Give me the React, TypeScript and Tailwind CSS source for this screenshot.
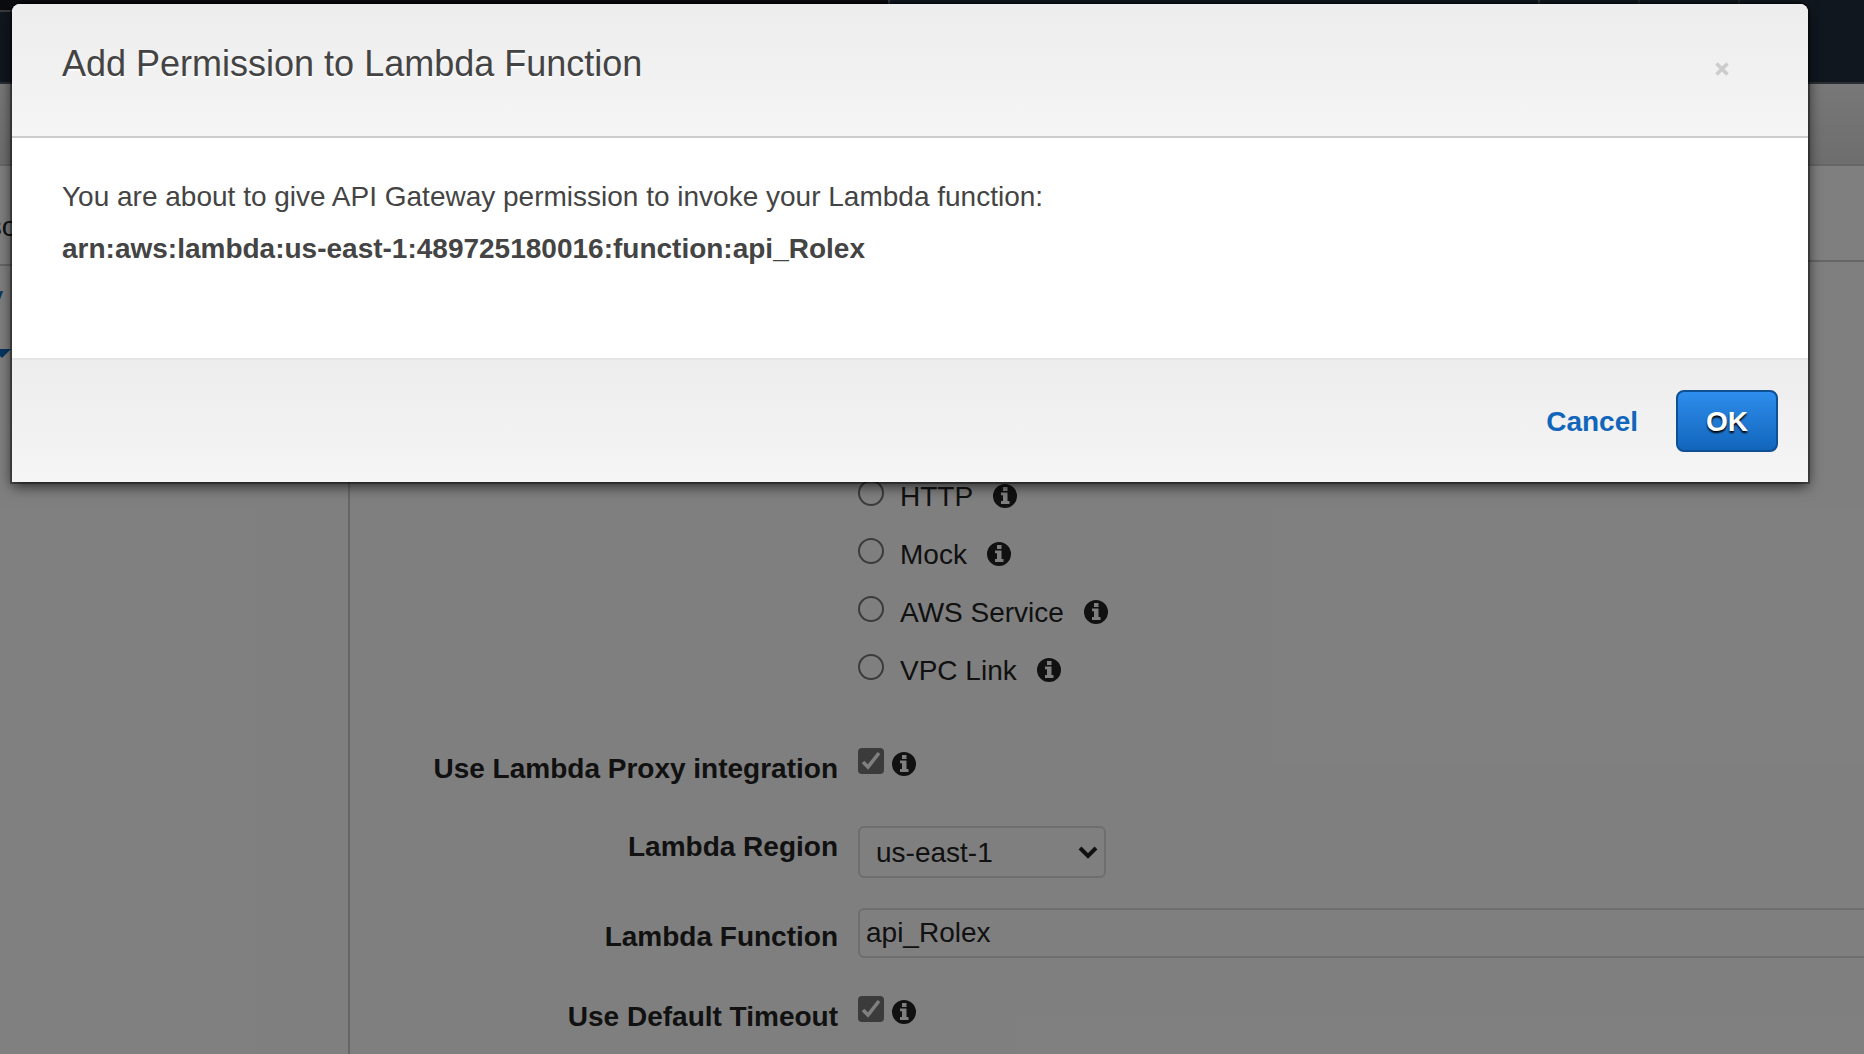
import React from 'react';
import { clsx } from 'clsx';

const integrationTypes = ['HTTP', 'Mock', 'AWS Service', 'VPC Link'];

function InfoIcon({ className }: { className?: string }) {
  return (
    <svg viewBox="0 0 24 24" className={clsx('size-6 shrink-0', className)} aria-hidden="true">
      <path
        fill="#222"
        fillRule="evenodd"
        d="M12 0a12 12 0 1 1 0 24a12 12 0 0 1 0-24zM10 3v4h4.500V3zM8 8.500v2.800h2v5.700H8v3h8.500v-3h-2V8.500z"
      />
    </svg>
  );
}

function Checkbox({ id }: { id: string }) {
  return (
    <span className="relative block size-[26px] shrink-0">
      <input
        id={id}
        type="checkbox"
        defaultChecked
        className="peer block size-[26px] appearance-none rounded border-2 border-[#767676] checked:bg-[#767676]"
      />
      <svg viewBox="0 0 26 26" className="pointer-events-none absolute inset-0 hidden peer-checked:block" aria-hidden="true">
        <path d="M5 14l5 5L21 5" fill="none" stroke="#fff" strokeWidth="3.6" />
      </svg>
    </span>
  );
}

interface FormRowProps {
  label: string;
  htmlFor: string;
  labelClassName?: string;
  className?: string;
  children: React.ReactNode;
}

function FormRow({ label, htmlFor, labelClassName, className, children }: FormRowProps) {
  return (
    <div className={clsx('flex items-start gap-5', className)}>
      <label
        htmlFor={htmlFor}
        className={clsx('w-[488px] shrink-0 text-right leading-[42px] font-bold', labelClassName)}
      >
        {label}
      </label>
      {children}
    </div>
  );
}

export default function App() {
  return (
    <div className="relative h-screen overflow-hidden bg-white font-['Liberation_Sans',Arial,sans-serif] text-[28px] text-[#222]">
      <div className="flex h-full min-w-[1920px] flex-col">
        {/* Console navigation */}
        <nav className="flex h-[84px] shrink-0 border-b-2 border-[#545b64] bg-[#232f3e]">
          <div className="w-[888px]">
            <div className="h-3 border-b-2 border-[#777] bg-[#16191f]" />
          </div>
          <div className="h-1 w-[652px] border-x-2 border-[#687078]" />
          <div className="h-1 w-[100px] border-r-2 border-[#444c56]" />
          <div className="h-1 w-[100px] border-r-2 border-[#444c56]" />
        </nav>
        <div className="h-[82px] shrink-0 border-b-2 border-[#ccc] bg-linear-to-b from-[#f0f0f0] to-[#dcdcdc]" />

        <div className="flex grow">
          <aside className="w-[350px] shrink-0 border-r-2 border-[#ccc]">
            <div className="flex h-[100px] items-center border-b-2 border-[#ccc]">
              <span className="-ml-12 pt-6">Resources</span>
            </div>
            <div className="relative h-[83px]">
              <span className="absolute top-2.5 left-[-11px] text-[#146eb4]">y</span>
              <svg viewBox="0 0 18 9" className="absolute top-[83px] -left-[7px] h-[9px] w-[18px]" aria-hidden="true">
                <path d="M0 0h18l-9 9z" fill="#0f69c4" />
              </svg>
            </div>
          </aside>

          <main className="flex grow flex-col">
            <div className="h-24 shrink-0 border-b-2 border-[#ccc]" />
            <form className="pt-[205px]">
              <div className="pb-[49px] pl-[508px]">
                {integrationTypes.map((type) => (
                  <div key={type} className="flex h-[58px] items-center">
                    <label className="flex h-full items-center gap-4">
                      <input
                        type="radio"
                        name="integration"
                        className="mb-1.5 size-[26px] appearance-none rounded-full border-2 border-[#767676]"
                      />
                      <span className="pt-0.5">{type}</span>
                    </label>
                    <InfoIcon className="ml-5" />
                  </div>
                ))}
              </div>

              <FormRow label="Use Lambda Proxy integration" htmlFor="proxy" className="mb-9">
                <div className="flex gap-2">
                  <Checkbox id="proxy" />
                  <InfoIcon className="mt-1" />
                </div>
              </FormRow>

              <FormRow label="Lambda Region" htmlFor="region" className="mb-[30px]">
                <div className="relative">
                  <select
                    id="region"
                    className="block h-[52px] w-[248px] appearance-none rounded-md border-2 border-[#ddd] bg-white px-4 pt-0.5"
                  >
                    <option>us-east-1</option>
                  </select>
                  <svg viewBox="0 0 20 13" className="pointer-events-none absolute top-5 right-2 h-[13px] w-5" aria-hidden="true">
                    <path d="M2 2l8 8 8-8" fill="none" stroke="#222" strokeWidth="4" />
                  </svg>
                </div>
              </FormRow>

              <FormRow label="Lambda Function" htmlFor="function" labelClassName="pt-2" className="mb-[38px] h-[50px]">
                <input
                  id="function"
                  type="text"
                  defaultValue="api_Rolex"
                  className="h-[50px] min-w-0 grow rounded-md border-2 border-[#ddd] px-1.5"
                />
              </FormRow>

              <FormRow label="Use Default Timeout" htmlFor="timeout">
                <div className="flex gap-2">
                  <Checkbox id="timeout" />
                  <InfoIcon className="mt-1" />
                </div>
              </FormRow>
            </form>
          </main>
        </div>
      </div>

      {/* Backdrop */}
      <div className="absolute inset-0 bg-black/50" />

      <div
        role="dialog"
        aria-labelledby="dialog-title"
        className="absolute top-1 right-14 left-3 rounded-t-lg bg-white text-[#444] shadow-[0_0_0_2px_rgba(0,0,0,0.35),0_4px_14px_rgba(0,0,0,0.7)]"
      >
        <header className="flex h-[134px] items-start justify-between rounded-t-lg border-b-2 border-[#ccc] bg-linear-to-b from-[#ededed] to-[#f5f5f5] pt-[38px] pr-[77px] pl-[50px]">
          <h2 id="dialog-title" className="text-[36px] leading-[44px] [text-shadow:0_2px_0_#fff]">
            Add Permission to Lambda Function
          </h2>
          <button type="button" aria-label="Close" className="mt-[18px] p-0.5">
            <svg viewBox="0 0 14 14" className="size-3.5" aria-hidden="true">
              <path d="M1.500 1.500l11 11M12.500 1.500l-11 11" stroke="#ccc" strokeWidth="3.6" />
            </svg>
          </button>
        </header>
        <div className="h-[220px] px-[50px] pt-[33px] leading-[52px]">
          <p>You are about to give API Gateway permission to invoke your Lambda function:</p>
          <p className="font-bold">arn:aws:lambda:us-east-1:489725180016:function:api_Rolex</p>
        </div>
        <footer className="flex h-[124px] items-center justify-end gap-[38px] border-t-2 border-[#e5e5e5] bg-linear-to-b from-[#ededed] to-[#f5f5f5] pr-[30px] font-bold">
          <button type="button" className="pt-0.5 text-[#1166bb]">
            Cancel
          </button>
          <button
            type="button"
            className="h-[62px] w-[102px] rounded-lg border-2 border-[#0f4f93] bg-linear-to-b from-[#2e8ded] to-[#1166bb] pt-0.5 text-white [text-shadow:0_2px_2px_#000]"
          >
            OK
          </button>
        </footer>
      </div>
    </div>
  );
}
